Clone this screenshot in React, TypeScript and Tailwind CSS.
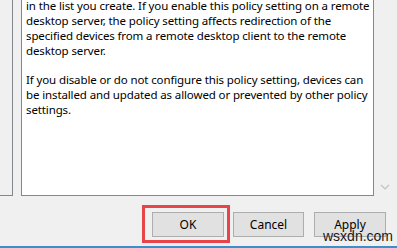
import React from "react";

const lines = [
  "in the list you create. If you enable this policy setting on a remote",
  "desktop server, the policy setting affects redirection of the",
  "specified devices from a remote desktop client to the remote",
  "desktop server.",
  "\u00a0",
  "If you disable or do not configure this policy setting, devices can",
  "be installed and updated as allowed or prevented by other policy",
  "settings.",
];

export default function App() {
  return (
    <div
      className="relative w-[397px] h-[248px] overflow-hidden bg-[#f0f0f0] text-black"
      style={{ fontFamily: '"Noto Sans", "Open Sans", sans-serif' }}
    >
      <div className="flex h-[196px]">
        <div className="w-[13px] h-full border-r border-b border-[#828790] bg-[#f0f0f0]" />
        <div className="w-[8px]" />
        <div className="w-[353px] h-full bg-white border-l border-r border-b border-[#828790] overflow-hidden">
          <div className="pl-[4px] -mt-[1px] text-[11.5px] tracking-[-0.12px] leading-[14.86px] whitespace-nowrap">
            {lines.map((l, i) => (
              <div key={i}>{l}</div>
            ))}
          </div>
        </div>
        <div className="flex-1 relative">
          <svg className="absolute left-[6px] top-[183px]" width="10" height="8" viewBox="0 0 10 8">
            <path d="M1 2 L5 6 L9 2" fill="none" stroke="#c2c2c2" strokeWidth="1.2" />
          </svg>
        </div>
      </div>
      <div className="flex pl-[152px] pt-[16px] gap-[9px] text-[12px]">
        <button className="w-[72px] h-[25px] bg-[#e1e1e1] border border-[#adadad] flex items-center justify-center">
          OK
        </button>
        <button className="w-[71px] h-[25px] bg-[#e1e1e1] border border-[#adadad] flex items-center justify-center">
          Cancel
        </button>
        <button className="ml-[1px] w-[72px] h-[25px] bg-[#e1e1e1] border border-[#adadad] flex items-center justify-center">
          Apply
        </button>
      </div>
      <div className="absolute left-[142px] top-[205px] w-[88px] h-[38px] border-[3px] border-[#e8454a]" />
      <div
        className="absolute left-[323px] top-[228px] text-[14px] leading-[16px] text-[#1a1a1a]"
        style={{ fontFamily: '"Liberation Sans", Arial, sans-serif' }}
      >
        wsxdn.com
      </div>
      <div className="absolute left-0 bottom-0 w-full h-[2px] bg-[#3d8fcb]" />
    </div>
  );
}
